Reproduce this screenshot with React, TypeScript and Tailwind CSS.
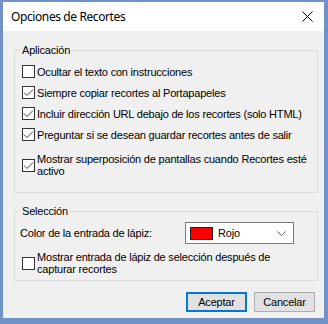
import React from "react";

const font = { fontFamily: '"Liberation Sans", Arial, sans-serif' };

function Box({ checked }: { checked?: boolean }) {
  return (
    <span className="ml-[1px] flex h-[13px] w-[13px] shrink-0 items-center justify-center border border-[#333333] bg-white">
      {checked && (
        <svg width="11" height="11" viewBox="0 0 11 11">
          <polyline points="1,5.5 4,8.5 10,2.5" fill="none" stroke="#444444" strokeWidth="1" />
        </svg>
      )}
    </span>
  );
}

function Check({ checked, children, className = "" }: { checked?: boolean; children: React.ReactNode; className?: string }) {
  return (
    <div className={"flex items-center gap-[2px] " + className}>
      <Box checked={checked} />
      <span className="whitespace-nowrap leading-[12px]">{children}</span>
    </div>
  );
}

export default function App() {
  return (
    <div className="h-[324px] w-[328px] bg-[#7092c6] pb-[6px] pl-[3px] pr-[4px] pt-[2px] text-[11px] tracking-[-0.2px] text-black" style={font}>
      <div className="flex h-full flex-col bg-[#f0f0f0]">
        {/* title bar */}
        <div className="flex h-[29px] items-center justify-between bg-white pl-[8px] pr-[11px]">
          <span className="text-[12px] tracking-[-0.4px]" style={{ fontFamily: '"Noto Sans", sans-serif' }}>Opciones de Recortes</span>
          <svg width="11" height="11" viewBox="0 0 11 11">
            <path d="M0.5 0.5 L10.5 10.5 M10.5 0.5 L0.5 10.5" stroke="#000" strokeWidth="1" />
          </svg>
        </div>

        {/* Aplicación */}
        <fieldset className="ml-[11px] mt-[12px] w-[304px] border border-[#dcdcdc] px-[6px] pb-[15px]">
          <legend className="-ml-[1px] px-[2px] leading-[14px]">Aplicación</legend>
          <div className="mt-[4px] flex flex-col">
            <Check className="h-[21px]">Ocultar el texto con instrucciones</Check>
            <Check className="h-[21px]" checked>Siempre copiar recortes al Portapapeles</Check>
            <Check className="h-[21px]" checked>Incluir dirección URL debajo de los recortes (solo HTML)</Check>
            <Check className="h-[21px]" checked>Preguntar si se desean guardar recortes antes de salir</Check>
            <Check className="mt-[8px]" checked>
              Mostrar superposición de pantallas cuando Recortes esté
              <br />
              activo
            </Check>
          </div>
        </fieldset>

        {/* Selección */}
        <fieldset className="ml-[11px] mt-[11px] w-[304px] border border-[#dcdcdc] px-[6px] pb-[5px]">
          <legend className="-ml-[1px] px-[2px] leading-[14px]">Selección</legend>
          <div className="mt-[4px] flex h-[22px] items-center">
            <span className="-ml-[1px] w-[165px]">Color de la entrada de lápiz:</span>
            <div className="flex h-[22px] w-[109px] items-center border border-[#7a7a7a] bg-white pl-[4px] pr-[7px]">
              <span className="h-[13px] w-[23px] border border-[#202020] bg-[#ff0000]" />
              <span className="ml-[5px] flex-1">Rojo</span>
              <svg width="9" height="5" viewBox="0 0 9 5">
                <path d="M0.5 0.5 L4.5 4.5 L8.5 0.5" fill="none" stroke="#606060" strokeWidth="1" />
              </svg>
            </div>
          </div>
          <Check className="mt-[7px]">
            Mostrar entrada de lápiz de selección después de
            <br />
            capturar recortes
          </Check>
        </fieldset>

        {/* buttons */}
        <div className="mt-[11px] flex justify-end gap-[7px] pr-[9px]">
          <button className="flex h-[20px] w-[61px] items-center justify-center border-2 border-[#0078d7] bg-[#e1e1e1]">Aceptar</button>
          <button className="flex h-[20px] w-[61px] items-center justify-center border border-[#adadad] bg-[#e1e1e1]">Cancelar</button>
        </div>
      </div>
    </div>
  );
}
